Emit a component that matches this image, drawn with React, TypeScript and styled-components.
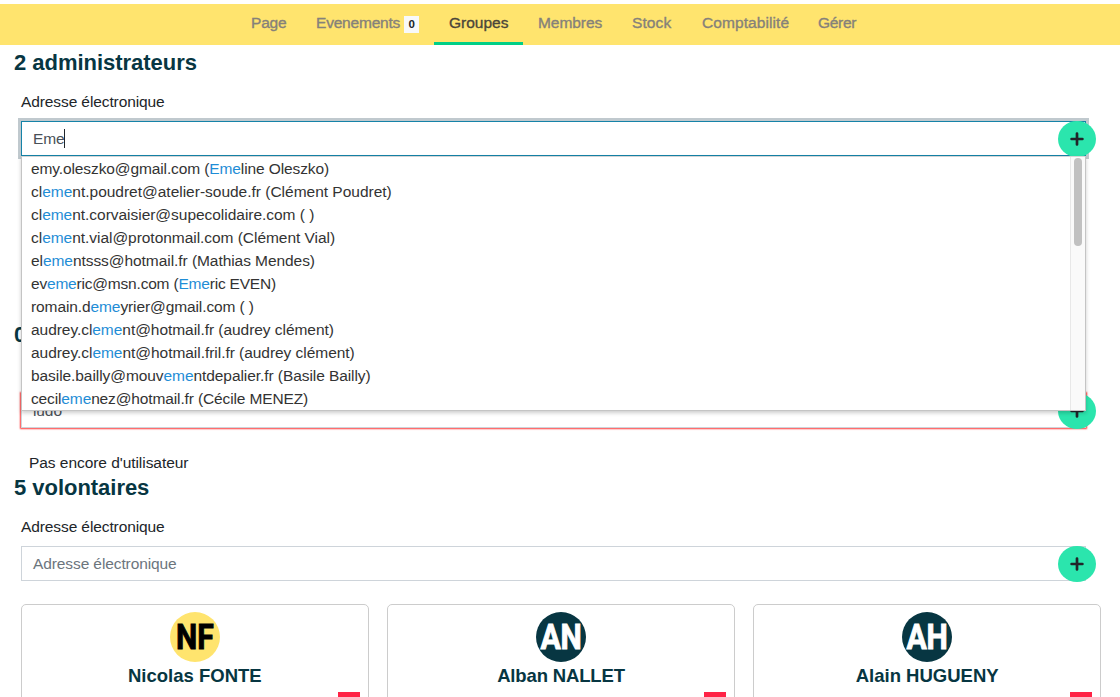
import React from "react";
import styled, { createGlobalStyle, css } from "styled-components";

const GlobalStyle = createGlobalStyle`
  *, *::before, *::after { box-sizing: border-box; }
  body {
    margin: 0;
    background: #fff;
    color: #212529;
    font-family: "Liberation Sans", Arial, sans-serif;
    font-size: 15.5px;
    overflow: hidden;
  }
`;

const Page = styled.div`
  height: 697px;
  overflow: hidden;
  padding-top: 4px;
`;

const Nav = styled.nav`
  display: flex;
  height: 41px;
  padding-left: 236px;
  background: #ffe46e;
`;

const NavItem = styled.a<{ $width: number; $active?: boolean; $tracking?: number }>`
  display: flex;
  align-items: center;
  gap: 4px;
  width: ${(p) => p.$width}px;
  padding: 0 0 1px 15px;
  border-bottom: 3px solid ${(p) => (p.$active ? "#00cf87" : "transparent")};
  color: ${(p) => (p.$active ? "#4b463a" : "#85817a")};
  letter-spacing: ${(p) => p.$tracking ?? 0}px;
  -webkit-text-stroke: 0.35px currentColor;
  white-space: nowrap;
`;

const Badge = styled.span`
  width: 15px;
  height: 17px;
  margin-top: 3px;
  background: #f8f9fa;
  color: #212529;
  font-size: 11.5px;
  font-weight: 700;
  line-height: 17px;
  letter-spacing: 0;
  text-align: center;
  -webkit-text-stroke: 0;
`;

const Main = styled.main`
  padding-top: 5px;
`;

const Section = styled.section<{ $height?: number }>`
  height: ${(p) => (p.$height ? `${p.$height}px` : "auto")};
  padding-left: 21px;
`;

const Heading = styled.h2`
  margin: 0 0 14px -7px;
  color: #073642;
  font-size: 22px;
  line-height: 26px;
  letter-spacing: -0.03px;
`;

const Label = styled.label`
  display: block;
  height: 24px;
  margin-bottom: 7px;
  line-height: 24px;
  letter-spacing: -0.1px;
`;

const Field = styled.div`
  position: relative;
  width: 1065px;
  height: 35px;
`;

const InputBox = styled.div<{ $state?: "focus" | "invalid" }>`
  display: flex;
  align-items: center;
  height: 35px;
  padding-left: 11px;
  border: 1px solid #ced4da;
  color: #495057;
  letter-spacing: -0.1px;
  ${(p) =>
    p.$state === "focus" &&
    css`
      border-color: #1583a8;
      box-shadow: 0 0 0 3px #c0c9ce;
    `}
  ${(p) =>
    p.$state === "invalid" &&
    css`
      box-shadow: 0 0 1.5px 1px #ff3b3b;
    `}
`;

const Placeholder = styled.span`
  color: #6c757d;
`;

const Caret = styled.i`
  width: 1px;
  height: 19px;
  margin-left: -0.5px;
  background: #212529;
`;

const AddButton = styled.button`
  position: absolute;
  top: 0;
  right: -10px;
  display: grid;
  place-items: center;
  width: 38px;
  height: 36px;
  padding: 0 1px 0 0;
  border: 0;
  border-radius: 50%;
  background: #2be5ad;
  color: #212529;
`;

const Dropdown = styled.div`
  position: absolute;
  z-index: 10;
  top: 35px;
  left: 0;
  display: flex;
  justify-content: space-between;
  width: 1065px;
  height: 255px;
  border: 1px solid #c4c4c4;
  border-top-color: #d5d5d5;
  background: #fff;
  box-shadow: 0 2px 4px rgba(0, 0, 0, 0.2);
  overflow: hidden;
`;

const Options = styled.ul`
  margin: 0;
  padding: 0 0 0 9px;
  list-style: none;
`;

const Option = styled.li<{ $tracking: number }>`
  height: 23px;
  line-height: 23px;
  color: #333;
  letter-spacing: ${(p) => p.$tracking}px;
  white-space: nowrap;
`;

const Match = styled.span`
  color: #1f8dd6;
`;

const ScrollTrack = styled.div`
  width: 15px;
  padding: 1px 3px 0;
  border-left: 1px solid #e8e8e8;
  background: #fafafa;
`;

const ScrollThumb = styled.div`
  width: 8px;
  height: 88px;
  border-radius: 4px;
  background: #c1c1c1;
`;

const Empty = styled.p`
  margin: 23px 0 0 8px;
  line-height: 24px;
  letter-spacing: -0.05px;
`;

const Cards = styled.div`
  display: grid;
  grid-template-columns: repeat(3, 1fr);
  gap: 18.5px;
  width: 1080px;
  margin-top: 23px;
`;

const Card = styled.article`
  display: flex;
  flex-direction: column;
  align-items: center;
  height: 130px;
  padding: 7px 8px;
  border: 1px solid #ccc;
  border-radius: 5px;
`;

const Avatar = styled.div<{ $light?: boolean }>`
  display: grid;
  place-items: center;
  width: 50px;
  height: 50px;
  border-radius: 50%;
  background: ${(p) => (p.$light ? "#ffe46e" : "#073642")};
  color: ${(p) => (p.$light ? "#000" : "#fff")};
  font: 700 35px/50px Roboto, sans-serif;
  -webkit-text-stroke: 0.9px currentColor;
`;

const Initials = styled.span`
  transform: translateY(0.5px) scaleX(0.86);
`;

const Name = styled.h3<{ $tracking?: number }>`
  margin: 0 0 2px;
  color: #073642;
  font-size: 18.5px;
  line-height: 28px;
  letter-spacing: ${(p) => p.$tracking ?? 0}px;
`;

const RemoveButton = styled.button`
  align-self: flex-end;
  width: 22px;
  height: 30px;
  padding: 0;
  border: 0;
  background: #ff2346;
`;

const navItems = [
  { label: "Page", width: 65, tracking: -0.2 },
  { label: "Evenements", width: 133, badge: 0, tracking: -0.2 },
  { label: "Groupes", width: 89, active: true },
  { label: "Membres", width: 94, tracking: -0.05 },
  { label: "Stock", width: 70, tracking: 0.1 },
  { label: "Comptabilité", width: 116, tracking: 0.08 },
  { label: "Gérer", width: 68, tracking: -0.3 },
];

const suggestions: { text: string; tracking: number }[] = [
  { text: "emy.oleszko@gmail.com (Emeline Oleszko)", tracking: -0.11 },
  { text: "clement.poudret@atelier-soude.fr (Clément Poudret)", tracking: -0.01 },
  { text: "clement.corvaisier@supecolidaire.com ( )", tracking: -0.03 },
  { text: "clement.vial@protonmail.com (Clément Vial)", tracking: -0.04 },
  { text: "elementsss@hotmail.fr (Mathias Mendes)", tracking: -0.06 },
  { text: "evemeric@msn.com (Emeric EVEN)", tracking: -0.2 },
  { text: "romain.demeyrier@gmail.com ( )", tracking: -0.1 },
  { text: "audrey.clement@hotmail.fr (audrey clément)", tracking: -0.05 },
  { text: "audrey.clement@hotmail.fril.fr (audrey clément)", tracking: -0.04 },
  { text: "basile.bailly@mouvementdepalier.fr (Basile Bailly)", tracking: -0.07 },
  { text: "cecilemenez@hotmail.fr (Cécile MENEZ)", tracking: -0.13 },
];

const members = [
  { name: "Nicolas FONTE", initials: "NF", light: true },
  { name: "Alban NALLET", initials: "AN", tracking: -0.15 },
  { name: "Alain HUGUENY", initials: "AH" },
];

const highlight = (text: string) =>
  text
    .split(/(eme)/i)
    .map((part, i) => (i % 2 ? <Match key={i}>{part}</Match> : part));

const Add = () => (
  <AddButton aria-label="Ajouter">
    <svg width="14" height="14" viewBox="0 0 14 14" fill="none" stroke="currentColor" strokeWidth="2.7" strokeLinecap="round">
      <path d="M7 1.6v10.8M1.6 7h10.8" />
    </svg>
  </AddButton>
);

export default function App() {
  return (
    <>
      <GlobalStyle />
      <Page>
        <Nav>
          {navItems.map((item) => (
            <NavItem key={item.label} $width={item.width} $active={item.active} $tracking={item.tracking}>
              {item.label}
              {item.badge !== undefined && <Badge>{item.badge}</Badge>}
            </NavItem>
          ))}
        </Nav>
        <Main>
          <Section $height={272}>
            <Heading>2 administrateurs</Heading>
            <Label>Adresse électronique</Label>
            <Field>
              <InputBox $state="focus">
                Eme
                <Caret />
              </InputBox>
              <Add />
              <Dropdown>
                <Options>
                  {suggestions.map((s) => (
                    <Option key={s.text} $tracking={s.tracking}>
                      {highlight(s.text)}
                    </Option>
                  ))}
                </Options>
                <ScrollTrack>
                  <ScrollThumb />
                </ScrollTrack>
              </Dropdown>
            </Field>
          </Section>
          <Section $height={153}>
            <Heading>0</Heading>
            <Label />
            <Field>
              <InputBox $state="invalid">ludo</InputBox>
              <Add />
            </Field>
            <Empty>Pas encore d'utilisateur</Empty>
          </Section>
          <Section>
            <Heading>5 volontaires</Heading>
            <Label>Adresse électronique</Label>
            <Field>
              <InputBox>
                <Placeholder>Adresse électronique</Placeholder>
              </InputBox>
              <Add />
            </Field>
            <Cards>
              {members.map((m) => (
                <Card key={m.name}>
                  <Avatar $light={m.light}>
                    <Initials>{m.initials}</Initials>
                  </Avatar>
                  <Name $tracking={m.tracking}>{m.name}</Name>
                  <RemoveButton aria-label="Retirer" />
                </Card>
              ))}
            </Cards>
          </Section>
        </Main>
      </Page>
    </>
  );
}
